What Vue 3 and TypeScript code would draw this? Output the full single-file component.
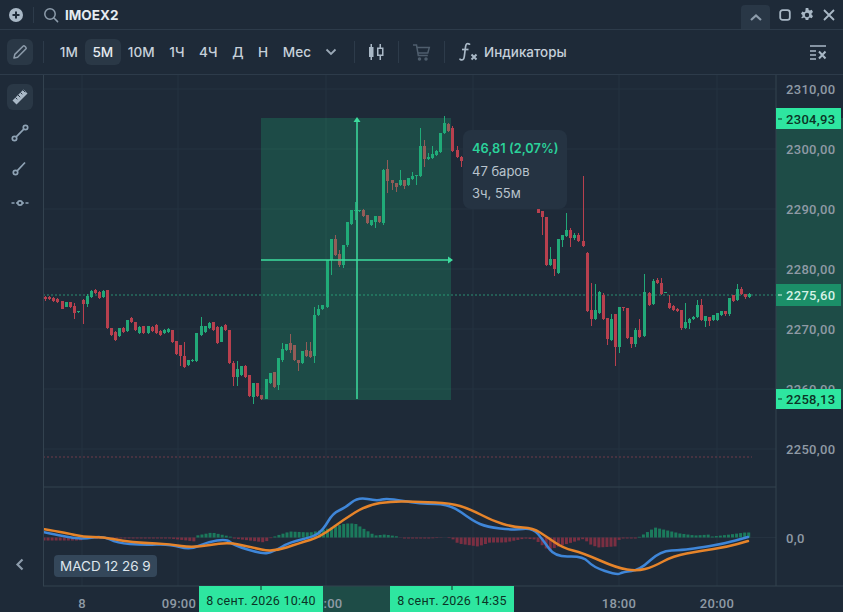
<script setup lang="ts">
// x, body top, body bottom, wick top, wick bottom, colour
type Candle = [number, number, number, number, number, "g" | "r"];

const candles: Candle[] = [
  [45, 297, 299, 296, 301, "r"], [49, 297, 299, 296, 300, "r"], [53, 298, 301, 297, 302, "r"], [57, 299, 302, 298, 303, "r"],
  [62, 301, 309, 301, 309, "r"], [66, 302, 307, 302, 307, "g"], [70, 302, 307, 302, 308, "r"], [74, 306, 313, 303, 319, "r"],
  [78, 311, 312, 311, 313, "g"], [83, 300, 304, 299, 324, "r"], [87, 296, 304, 294, 307, "g"], [91, 291, 297, 290, 298, "g"],
  [95, 290, 293, 289, 294, "r"], [99, 292, 298, 291, 299, "r"], [103, 291, 297, 290, 298, "g"], [107, 290, 328, 290, 329, "r"],
  [111, 328, 335, 328, 336, "r"], [115, 332, 340, 331, 341, "r"], [119, 328, 336, 328, 337, "g"], [123, 328, 332, 327, 333, "r"],
  [127, 320, 331, 320, 332, "g"], [131, 318, 322, 317, 323, "r"], [135, 322, 330, 322, 331, "r"], [139, 327, 333, 326, 334, "g"],
  [143, 326, 333, 326, 334, "r"], [148, 326, 333, 326, 334, "g"], [152, 327, 331, 326, 332, "r"], [156, 325, 333, 324, 334, "r"],
  [160, 331, 335, 330, 336, "r"], [164, 330, 333, 329, 334, "g"], [168, 329, 332, 328, 333, "g"], [172, 330, 342, 330, 343, "r"],
  [176, 341, 354, 341, 355, "r"], [180, 345, 356, 345, 366, "r"], [184, 356, 367, 342, 368, "r"], [188, 360, 365, 360, 366, "g"],
  [192, 360, 361, 359, 362, "g"], [196, 333, 361, 333, 362, "g"], [201, 326, 335, 317, 336, "g"], [205, 326, 332, 326, 333, "g"],
  [209, 323, 328, 322, 329, "g"], [213, 322, 330, 322, 331, "r"], [217, 327, 343, 326, 344, "r"], [221, 327, 342, 326, 342, "g"],
  [225, 325, 330, 324, 331, "r"], [229, 330, 363, 330, 364, "r"], [233, 363, 377, 361, 386, "r"], [237, 369, 377, 361, 386, "g"],
  [241, 366, 375, 366, 376, "g"], [245, 366, 377, 365, 378, "r"], [249, 375, 396, 375, 397, "r"], [253, 383, 397, 383, 404, "g"],
  [257, 383, 396, 383, 397, "r"], [261, 395, 399, 395, 400, "r"], [266, 379, 399, 379, 399, "g"], [270, 373, 383, 373, 384, "g"],
  [274, 372, 387, 372, 388, "r"], [278, 358, 385, 358, 390, "g"], [282, 349, 360, 343, 362, "g"], [286, 344, 350, 344, 351, "g"],
  [290, 343, 350, 334, 353, "r"], [294, 345, 360, 345, 361, "r"], [298, 360, 363, 360, 371, "r"], [302, 351, 363, 351, 364, "g"],
  [306, 350, 356, 342, 357, "r"], [310, 351, 357, 342, 358, "r"], [314, 315, 356, 307, 363, "g"], [318, 309, 315, 305, 316, "g"],
  [322, 305, 309, 305, 310, "g"], [327, 260, 307, 260, 308, "g"], [331, 239, 260, 239, 275, "g"], [335, 239, 255, 235, 256, "r"],
  [339, 254, 265, 250, 267, "r"], [343, 245, 265, 245, 268, "g"], [347, 222, 245, 222, 247, "g"], [351, 210, 224, 210, 225, "g"],
  [355, 210, 211, 202, 220, "g"], [359, 210, 211, 210, 212, "g"], [363, 210, 216, 209, 217, "r"], [367, 215, 223, 215, 224, "r"],
  [371, 220, 225, 220, 226, "g"], [375, 216, 222, 216, 228, "g"], [379, 216, 222, 216, 223, "r"], [383, 170, 223, 169, 225, "g"],
  [387, 169, 181, 160, 193, "r"], [392, 180, 183, 180, 190, "r"], [396, 183, 187, 183, 192, "r"], [400, 180, 185, 170, 186, "g"],
  [404, 180, 186, 180, 189, "r"], [408, 178, 185, 178, 186, "g"], [412, 176, 179, 172, 180, "g"], [416, 175, 176, 175, 185, "g"],
  [420, 146, 176, 128, 177, "g"], [424, 146, 159, 140, 167, "r"], [428, 157, 159, 153, 160, "g"], [432, 154, 158, 146, 159, "g"],
  [436, 151, 155, 150, 156, "g"], [440, 133, 152, 133, 153, "g"], [444, 123, 133, 116, 134, "g"], [448, 124, 131, 123, 132, "r"],
  [452, 128, 151, 126, 152, "r"], [457, 150, 157, 146, 158, "r"], [461, 157, 161, 156, 167, "r"],
  [538, 208, 213, 208, 213, "r"], [542, 211, 217, 211, 235, "r"], [546, 217, 265, 217, 266, "r"], [550, 259, 265, 247, 266, "g"],
  [554, 259, 269, 259, 276, "r"], [558, 239, 273, 239, 274, "g"], [562, 235, 240, 235, 247, "g"], [566, 230, 236, 213, 237, "g"],
  [570, 230, 238, 228, 247, "r"], [574, 235, 238, 233, 240, "g"], [578, 235, 241, 233, 242, "r"], [583, 241, 246, 176, 247, "r"],
  [587, 253, 311, 252, 312, "r"], [591, 310, 319, 283, 326, "r"], [595, 310, 319, 284, 320, "g"], [599, 292, 313, 291, 314, "g"],
  [603, 295, 319, 293, 320, "r"], [607, 318, 339, 318, 345, "r"], [611, 319, 340, 314, 341, "g"], [615, 314, 347, 314, 366, "r"],
  [619, 307, 347, 307, 353, "g"], [623, 307, 308, 307, 311, "r"], [627, 308, 338, 308, 339, "r"], [631, 337, 344, 337, 348, "r"],
  [635, 330, 344, 328, 347, "g"], [639, 330, 337, 319, 338, "r"], [644, 292, 336, 274, 337, "g"], [649, 293, 305, 292, 306, "r"],
  [653, 281, 304, 279, 305, "g"], [657, 280, 283, 278, 284, "r"], [661, 283, 294, 278, 295, "r"], [665, 292, 293, 292, 293, "g"],
  [669, 303, 308, 295, 309, "r"], [673, 306, 310, 305, 311, "r"], [677, 309, 311, 308, 312, "r"], [681, 310, 328, 310, 330, "r"],
  [685, 322, 328, 303, 329, "g"], [689, 319, 323, 318, 329, "g"], [693, 317, 319, 316, 320, "g"], [697, 305, 317, 300, 318, "g"],
  [701, 305, 320, 299, 321, "r"], [705, 316, 321, 316, 327, "g"], [709, 317, 321, 317, 326, "r"], [713, 315, 320, 315, 321, "g"],
  [717, 313, 320, 313, 321, "g"], [721, 311, 315, 311, 316, "g"], [725, 311, 314, 311, 316, "r"], [729, 298, 314, 298, 316, "g"],
  [733, 295, 301, 295, 302, "r"], [737, 289, 300, 284, 301, "g"], [741, 289, 294, 287, 295, "r"], [745, 294, 297, 294, 299, "r"],
  [749, 294, 297, 293, 298, "g"],
];

const gridX = [82, 178, 326, 473, 619, 717];
const prices = [
  { y: 89, label: "2310,00" },
  { y: 149, label: "2300,00" },
  { y: 209, label: "2290,00" },
  { y: 269, label: "2280,00" },
  { y: 329, label: "2270,00" },
  { y: 389, label: "2260,00" },
  { y: 449, label: "2250,00" },
];
const timeLabels = [
  { x: 82, label: "8" },
  { x: 179, label: "09:00" },
  { x: 619, label: "18:00" },
  { x: 717, label: "20:00" },
];

const blue: [number, number][] = [
  [43, 532], [67, 537], [83, 539], [103, 536], [117, 543], [143, 545], [170, 544], [190, 550], [207, 542], [227, 539],
  [233, 545], [262, 554], [273, 552], [290, 542], [313, 537], [323, 530], [333, 513], [345, 508], [358, 497], [377, 501],
  [387, 498], [420, 504], [450, 504], [473, 521], [487, 527], [513, 530], [533, 528], [543, 540], [555, 557], [583, 556],
  [593, 567], [617, 575], [623, 572], [640, 570], [660, 551], [683, 550], [697, 548], [723, 544], [748, 537],
];
const orange: [number, number][] = [
  [43, 529], [67, 533], [83, 537], [103, 537], [123, 541], [143, 543], [170, 544], [193, 548], [227, 542], [250, 547],
  [273, 552], [300, 543], [320, 537], [343, 520], [367, 505], [393, 501], [420, 502], [450, 503], [470, 509], [493, 521],
  [513, 527], [533, 528], [547, 537], [563, 548], [583, 553], [617, 568], [637, 571], [653, 567], [673, 556], [700, 551],
  [727, 547], [748, 541],
];

// keyframes of the MACD histogram: x, height above zero
const histKeys: [number, number][] = [
  [44, -3], [80, -3], [85, -1], [170, -1], [195, -4], [197, 2], [212, 5], [230, 1], [234, -1], [265, -5], [270, -1],
  [277, 2], [290, 6], [310, 5], [325, 8], [345, 14], [355, 14], [375, 2], [385, 3], [398, 1], [402, -1], [430, -1],
  [445, 0], [452, -1], [458, -6], [478, -9], [490, -5], [505, -5], [525, -1], [535, -2], [550, -14], [555, -10],
  [575, -4], [585, -1], [588, -6], [598, -10], [615, -9], [620, -1], [636, -1], [640, 1], [655, 10], [680, 4],
  [695, 2], [710, 3], [712, 1], [730, 3], [745, 5], [751, 5],
];

const histogram = Array.from({ length: 175 }, (_, i) => {
  const x = 44 + i * 4.05;
  const next = histKeys.findIndex((k) => k[0] >= x);
  if (next <= 0) return { x, h: histKeys[0][1] };
  const [x0, h0] = histKeys[next - 1];
  const [x1, h1] = histKeys[next];
  return { x, h: h0 + ((h1 - h0) * (x - x0)) / (x1 - x0) };
});

const smooth = (pts: [number, number][]) => {
  let d = `M${pts[0][0]} ${pts[0][1]}`;
  for (let i = 1; i < pts.length - 1; i++) {
    const mx = (pts[i][0] + pts[i + 1][0]) / 2;
    const my = (pts[i][1] + pts[i + 1][1]) / 2;
    d += ` Q${pts[i][0]} ${pts[i][1]} ${mx} ${my}`;
  }
  const last = pts[pts.length - 1];
  return d + ` L${last[0]} ${last[1]}`;
};

const bluePath = smooth(blue);
const orangePath = smooth(orange);

const frames = ["1M", "5M", "10M", "1Ч", "4Ч", "Д", "Н", "Мес"];
</script>

<template>
  <div class="terminal">
    <header class="topbar">
      <svg class="ic add" width="16" height="16" viewBox="0 0 16 16">
        <circle cx="8" cy="8" r="7" fill="#a9b8c6" />
        <path d="M8 4.5v7M4.5 8h7" stroke="#1e2a38" stroke-width="2" />
      </svg>
      <span class="vsep short"></span>
      <svg class="ic search" width="16" height="16" viewBox="0 0 16 16" fill="none" stroke="#8d9cab" stroke-width="1.5">
        <circle cx="7" cy="7" r="5.2" />
        <path d="M11 11l3.6 3.6" stroke-linecap="round" />
      </svg>
      <span class="ticker">IMOEX2</span>
      <div class="win">
        <button class="collapse">
          <svg width="14" height="8" viewBox="0 0 14 8" fill="none" stroke="#8d9cab" stroke-width="2.2">
            <path d="M2 7l5-4.6L12 7" />
          </svg>
        </button>
        <svg width="12" height="12" viewBox="0 0 12 12" fill="none" stroke="#a9b8c6" stroke-width="1.8">
          <rect x="1.2" y="1.2" width="9.6" height="9.6" rx="2.4" />
        </svg>
        <svg width="14" height="14" viewBox="0 0 14 14">
          <path
            fill="#a9b8c6"
            fill-rule="evenodd"
            d="M5.7 0h2.6l.4 1.9 1.2.6 1.8-.8 1.3 2.2-1.4 1.3v1.6l1.4 1.3-1.3 2.2-1.8-.8-1.2.7-.4 1.8H5.7l-.4-1.8-1.2-.7-1.8.8L1 9.9l1.4-1.3V7L1 5.7 2.3 3.5l1.8.8 1.2-.7zM7 4.8a2 2 0 1 0 0 4.4 2 2 0 0 0 0-4.4z"
          />
        </svg>
        <svg width="12" height="12" viewBox="0 0 12 12" stroke="#a9b8c6" stroke-width="1.8">
          <path d="M1 1l10 10M11 1L1 11" />
        </svg>
      </div>
    </header>

    <div class="toolbar">
      <button class="tool active">
        <svg width="16" height="16" viewBox="0 0 16 16" fill="none" stroke="#8d9cab" stroke-width="1.5">
          <path d="M2 14l.8-3.6L11 2.2a1.3 1.3 0 0 1 1.8 0l1 1a1.3 1.3 0 0 1 0 1.8L5.6 13.2z" stroke-linejoin="round" />
        </svg>
      </button>
      <span class="vsep tall first"></span>
      <div class="frames">
        <button v-for="f in frames" :key="f" class="frame" :class="{ current: f === '5M' }">{{ f }}</button>
      </div>
      <svg class="more" width="12" height="8" viewBox="0 0 12 8" fill="none" stroke="#9aa8b6" stroke-width="1.8">
        <path d="M1.5 1.5L6 6l4.5-4.5" />
      </svg>
      <span class="vsep tall after-more"></span>
      <svg class="candle-ic" width="18" height="18" viewBox="0 0 18 18" fill="#a9b8c6">
        <path d="M3.5 1H5v3h1.5v10H5v3H3.5v-3H2V4h1.5z" />
        <path d="M12.5 1H14v3.5h2.500V13H14v4h-1.500v-4H10V4.500h2.500zM11.500 6v5.500H15V6z" fill-rule="evenodd" />
      </svg>
      <span class="vsep tall gap14"></span>
      <svg class="cart-ic" width="19" height="19" viewBox="0 0 19 19" fill="none" stroke="#4f5e6d" stroke-width="1.5">
        <path d="M1 2h3.500l1.800 10.500h9.500" />
        <path d="M4.800 4.500h12.500l-1.500 5.500H5.800" />
        <circle cx="7.500" cy="16" r="1" fill="#4f5e6d" />
        <circle cx="14" cy="16" r="1" fill="#4f5e6d" />
      </svg>
      <span class="vsep tall gap14"></span>
      <svg class="fx-ic" width="19" height="20" viewBox="0 0 19 20" fill="none" stroke="#a9b8c6" stroke-width="1.7">
        <path d="M10.500 2.200C8 .6 6.800 2.200 6.500 5L5.300 14.500C5 17.500 3.500 18.800 1 17.200" stroke-linecap="round" />
        <path d="M3 7.500h6.500" />
        <path d="M12.500 12.500l5 5M17.500 12.500l-5 5" stroke-width="2" />
      </svg>
      <span class="indicators">Индикаторы</span>
      <svg class="clear-ic" width="17" height="15" viewBox="0 0 17 15" fill="none" stroke="#a9b8c6" stroke-width="1.5">
        <path d="M0 1h16M0 6h6M0 10h6M0 14h6" />
        <path d="M9 6.500l6.500 7M15.500 6.500L9 13.500" stroke-width="2" />
      </svg>
    </div>

    <div class="body">
      <aside class="side">
        <button class="tool active">
          <svg width="18" height="18" viewBox="0 0 18 18" fill="#a9b8c6">
            <path d="M1.500 12.500L12.500 1.500 16.500 5.500 5.500 16.500z" />
            <path d="M4.500 9.500l1.800 1.800M7 7l2.200 2.200M9.500 4.500l1.800 1.800M12 2l2.200 2.200" stroke="#2a3846" stroke-width="1" />
          </svg>
        </button>
        <svg class="draw" width="18" height="18" viewBox="0 0 18 18" fill="none" stroke="#8fa3b5" stroke-width="1.7">
          <circle cx="3.500" cy="14.500" r="2.200" />
          <circle cx="14.500" cy="3.500" r="2.200" />
          <path d="M5.200 12.800l7.600-7.600" />
        </svg>
        <svg class="draw" width="18" height="18" viewBox="0 0 18 18" fill="none" stroke="#8fa3b5" stroke-width="1.7">
          <circle cx="4.500" cy="13.500" r="2.200" />
          <path d="M6.200 11.800L14 3.500" />
        </svg>
        <svg class="draw" width="18" height="18" viewBox="0 0 18 18" fill="none" stroke="#8fa3b5" stroke-width="1.7">
          <circle cx="9" cy="9" r="2.200" />
          <path d="M0.500 9h3M5 9h1.500M11.500 9H13M14.500 9h3" />
        </svg>
        <svg class="back" width="9" height="13" viewBox="0 0 9 13" fill="none" stroke="#8d9cab" stroke-width="2.2">
          <path d="M7.500 1.500L2.500 6.500l5 5" />
        </svg>
      </aside>

      <div class="plot">
        <!-- viewBox keeps page coordinates so the numbers read straight off the screenshot -->
        <svg class="canvas" width="800" height="537" viewBox="43 75 800 537">
          <g class="grid">
            <line v-for="x in gridX" :key="x" :x1="x" :x2="x" y1="75" y2="586" />
            <line v-for="p in prices" :key="p.y" x1="43" x2="776" :y1="p.y" :y2="p.y" />
            <line x1="43" x2="776" y1="537.5" y2="537.5" />
          </g>

          <rect x="776" y="118" width="67" height="282" fill="#1e4c47" />
          <rect x="323" y="586" width="67" height="26" fill="#1e4c47" />

          <line class="dash green" x1="43" x2="776" y1="295" y2="295" />
          <line class="dash red" x1="43" x2="752" y1="457" y2="457" />

          <g v-for="c in candles" :key="c[0]" :class="c[5] === 'g' ? 'up' : 'down'">
            <rect :x="c[0]" :y="c[3]" width="1" :height="c[4] - c[3]" />
            <rect :x="c[0] - 1" :y="c[1]" width="3" :height="Math.max(c[2] - c[1], 1)" />
          </g>

          <rect x="261" y="118" width="190" height="282" fill="#1eb878" fill-opacity="0.24" />
          <g class="measure">
            <line x1="357" x2="357" y1="120" y2="399" />
            <line x1="261" x2="449" y1="260" y2="260" />
            <path d="M357 117l3.500 5h-7zM453 260l-5 3.500v-7z" />
          </g>

          <g v-for="(b, i) in histogram" :key="i" :class="b.h >= 0 ? 'hist-up' : 'hist-down'">
            <rect :x="b.x - 1.5" :y="b.h >= 0 ? 537.5 - b.h : 537.5" width="3" :height="Math.abs(b.h)" />
          </g>
          <path class="macd blue" :d="bluePath" />
          <path class="macd orange" :d="orangePath" />

          <line class="frame-line" x1="43" x2="776" y1="487" y2="487" />
          <line class="frame-line" x1="43" x2="843" y1="586" y2="586" />
          <line class="frame-line" x1="43.5" x2="43.5" y1="75" y2="586" />
          <line class="frame-line" x1="776" x2="776" y1="75" y2="586" />

          <text v-for="p in prices" :key="p.label" class="axis" x="786" :y="p.y + 5">{{ p.label }}</text>
          <text class="axis" x="786" y="543">0,0</text>
          <text v-for="t in timeLabels" :key="t.label" class="axis mid" :x="t.x" y="608">{{ t.label }}</text>
          <text class="axis mid" x="333" y="608">:00</text>

          <rect x="776" y="108" width="65" height="21" fill="#2ee6a0" />
          <text class="tag dark" x="786" y="124">2304,93</text>
          <rect x="776" y="284" width="65" height="22" fill="#1b8f68" />
          <text class="tag light" x="786" y="300">2275,60</text>
          <rect x="776" y="389" width="65" height="20" fill="#2ee6a0" />
          <text class="tag dark" x="786" y="404">2258,13</text>
          <line class="tick" x1="778" x2="782" y1="119" y2="119" />
          <line class="tick light" x1="778" x2="782" y1="295" y2="295" />
          <line class="tick" x1="778" x2="782" y1="399" y2="399" />

          <rect x="199" y="586" width="124" height="26" fill="#2ee6a0" />
          <text class="tag dark date mid" x="261" y="605">8 сент. 2026 10:40</text>
          <rect x="390" y="586" width="124" height="26" fill="#2ee6a0" />
          <text class="tag dark date mid" x="452" y="605">8 сент. 2026 14:35</text>
          <line class="tick" x1="261" x2="261" y1="586" y2="590" />
          <line class="tick" x1="452" x2="452" y1="586" y2="590" />
        </svg>

        <div class="stats">
          <div class="gain">46,81 (2,07%)</div>
          <div>47 баров</div>
          <div>3ч, 55м</div>
        </div>
        <div class="macd-tag">MACD 12 26 9</div>
      </div>
    </div>
  </div>
</template>

<style scoped>
.terminal {
  width: 843px;
  height: 612px;
  display: flex;
  flex-direction: column;
  overflow: hidden;
  background: #1e2a38;
  color: #c6d0da;
  font-family: Inter, "Liberation Sans", sans-serif;
}

button {
  border: none;
  background: none;
  padding: 0;
  font: inherit;
  color: inherit;
}

.topbar {
  height: 30px;
  flex: none;
  box-sizing: border-box;
  display: flex;
  align-items: center;
  padding-left: 8px;
  border-bottom: 1px solid #2d3b4a;
}

.vsep {
  width: 1px;
  background: #2d3b4a;
  flex: none;
}

.vsep.short {
  height: 16px;
  margin-left: 9px;
}

.search {
  margin-left: 9px;
}

.ticker {
  margin-left: 6px;
  font-size: 13.5px;
  font-weight: 700;
  color: #e6ebf0;
}

.win {
  margin-left: auto;
  height: 100%;
  display: flex;
  align-items: center;
  gap: 9px;
  padding-right: 8px;
}

.collapse {
  width: 29px;
  height: 24px;
  align-self: flex-end;
  border-radius: 4px 4px 0 0;
  background: #293746;
  display: flex;
  align-items: center;
  justify-content: center;
}

.toolbar {
  height: 45px;
  flex: none;
  box-sizing: border-box;
  display: flex;
  align-items: center;
  padding-left: 7px;
  border-bottom: 1px solid #2d3b4a;
}

.tool {
  width: 26px;
  height: 26px;
  flex: none;
  display: flex;
  align-items: center;
  justify-content: center;
  border-radius: 6px;
}

.tool.active {
  background: #2a3846;
}

.vsep.tall {
  height: 22px;
}

.vsep.first {
  margin-left: 10px;
}

.frames {
  display: flex;
  align-items: center;
  margin-left: 8.5px;
}

.frame {
  height: 26px;
  padding: 0 7.3px;
  border-radius: 6px;
  font-size: 13.6px;
  font-weight: 500;
  color: #c6d0da;
}

.frame.current {
  background: #2a3846;
  color: #e6ebf0;
}

.more {
  margin-left: 6.7px;
}

.vsep.after-more {
  margin-left: 17px;
}

.candle-ic {
  margin-left: 12px;
}

.vsep.gap14 {
  margin-left: 13px;
}

.cart-ic {
  margin-left: 13px;
}

.fx-ic {
  margin-left: 14px;
}

.indicators {
  margin-left: 6px;
  font-size: 13.4px;
  font-weight: 500;
  color: #c6d0da;
}

.clear-ic {
  margin-left: auto;
  margin-right: 16px;
}

.body {
  flex: 1;
  display: flex;
  min-height: 0;
}

.side {
  width: 43px;
  flex: none;
  box-sizing: border-box;
  display: flex;
  flex-direction: column;
  align-items: flex-start;
  padding: 9px 0 0 7px;
}

.draw {
  flex: none;
  margin: 17px 0 0 4px;
}

.tool + .draw {
  margin-top: 14px;
}

.back {
  margin: auto 0 41px 8px;
}

.plot {
  position: relative;
  flex: 1;
}

.canvas {
  display: block;
}

.grid line {
  stroke: #253240;
  stroke-width: 1;
}

.frame-line {
  stroke: #33424f;
  stroke-width: 1;
}

.dash {
  stroke-width: 1;
  stroke-dasharray: 2 2;
}

.dash.green {
  stroke: #2a8f73;
}

.dash.red {
  stroke: #6e3a48;
}

.up rect {
  fill: #22a878;
}

.down rect {
  fill: #b8404e;
}

.measure line {
  stroke: #3ddc9e;
  stroke-width: 1.5;
}

.measure path {
  fill: #3ddc9e;
}

.hist-up rect {
  fill: #1b7a5c;
}

.hist-down rect {
  fill: #7a2f42;
}

.macd {
  fill: none;
  stroke-width: 2.5;
  stroke-linejoin: round;
  stroke-linecap: round;
}

.macd.blue {
  stroke: #3f86d8;
}

.macd.orange {
  stroke: #e6842a;
}

.axis {
  font-family: Roboto, "Liberation Sans", sans-serif;
  font-size: 13px;
  font-weight: 500;
  letter-spacing: 0.3px;
  fill: #8f9aa5;
}

.mid {
  text-anchor: middle;
}

.tag {
  font-family: Roboto, "Liberation Sans", sans-serif;
  font-size: 13px;
  letter-spacing: 0.3px;
  font-weight: 500;
}

.tag.date {
  font-size: 12.5px;
  letter-spacing: 0.25px;
  font-weight: 400;
}

.tag.dark {
  fill: #0b3325;
}

.tag.light {
  fill: #d5f2e6;
}

.tick {
  stroke: #0b3325;
  stroke-width: 1;
}

.tick.light {
  stroke: #d5f2e6;
}

.stats {
  position: absolute;
  left: 420px;
  top: 55px;
  width: 104px;
  height: 79px;
  box-sizing: border-box;
  padding: 8px 9px;
  border-radius: 8px;
  background: #253342;
  font-size: 13px;
  line-height: 22px;
  color: #b9c3cd;
  white-space: nowrap;
}

.gain {
  font-size: 12.8px;
  font-weight: 600;
  color: #2bd19a;
}

.macd-tag {
  position: absolute;
  left: 11px;
  top: 480px;
  height: 22px;
  padding: 0 6px;
  border-radius: 4px;
  background: #34475a;
  font-size: 13.5px;
  line-height: 22px;
  color: #dfe6ec;
}
</style>
